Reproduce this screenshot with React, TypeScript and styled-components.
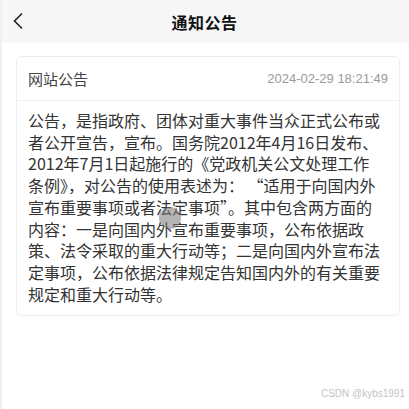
import React from "react";
import styled, { createGlobalStyle } from "styled-components";

const GlobalStyle = createGlobalStyle`
  html, body {
    margin: 0;
    padding: 0;
    background: #ffffff;
  }
  * {
    box-sizing: border-box;
  }
`;

const Page = styled.div`
  position: relative;
  width: 409px;
  height: 409px;
  overflow: hidden;
  background: #ffffff;
  font-family: "Noto Sans CJK SC", "Noto Sans", sans-serif;
  border-left: 2px solid #f0f0f0;
`;

const NavBar = styled.div`
  height: 43px;
  background: #f7f7f7;
  display: flex;
  align-items: center;
  justify-content: center;
  position: relative;
  margin-left: -2px;
`;

const BackButton = styled.div`
  position: absolute;
  left: 12px;
  top: 11px;
  width: 16px;
  height: 20px;
  display: flex;
  align-items: center;
`;

const NavTitle = styled.h1`
  margin: 0;
  font-size: 16px;
  font-weight: 700;
  color: #111;
  letter-spacing: 0.5px;
`;

const Body = styled.div`
  padding: 13px 9px 0 14px;
`;

const Card = styled.div`
  border: 1px solid #ececec;
  border-radius: 6px;
  background: #fff;
`;

const CardHeader = styled.div`
  height: 44px;
  display: flex;
  align-items: center;
  justify-content: space-between;
  padding: 0 11px;
  border-bottom: 1px solid #f0f0f0;
`;

const CardTitle = styled.span`
  font-size: 15px;
  color: #444;
`;

const CardDate = styled.span`
  font-family: "Liberation Sans", Arial, sans-serif;
  font-size: 13px;
  color: #9a9a9a;
`;

const CardContent = styled.div`
  display: flex;
  flex-direction: column;
  padding: 9px 11px 10px;
  font-size: 16px;
  line-height: 21.7px;
  color: #333;
`;

const Line = styled.span`
  white-space: nowrap;
`;

const TouchDot = styled.div`
  position: absolute;
  left: 157px;
  top: 207px;
  width: 22px;
  height: 22px;
  border-radius: 50%;
  background: rgba(120, 120, 120, 0.55);
`;

const Watermark = styled.span`
  position: absolute;
  right: 4px;
  bottom: 10px;
  font-family: "Liberation Sans", Arial, sans-serif;
  font-size: 10px;
  color: #c4c4c4;
`;

const lines = [
  "公告，是指政府、团体对重大事件当众正式公布或",
  "者公开宣告，宣布。国务院2012年4月16日发布、",
  "2012年7月1日起施行的《党政机关公文处理工作",
  "条例》，对公告的使用表述为： “适用于向国内外",
  "宣布重要事项或者法定事项”。其中包含两方面的",
  "内容：一是向国内外宣布重要事项，公布依据政",
  "策、法令采取的重大行动等；二是向国内外宣布法",
  "定事项，公布依据法律规定告知国内外的有关重要",
  "规定和重大行动等。",
];

const App = () => {
  return (
    <>
      <GlobalStyle />
      <Page>
        <NavBar>
          <BackButton>
            <svg width="12" height="18" viewBox="0 0 12 18" fill="none">
              <path d="M10 1.5 L2.5 9 L10 16.5" stroke="#222" strokeWidth="1.6" />
            </svg>
          </BackButton>
          <NavTitle>通知公告</NavTitle>
        </NavBar>
        <Body>
          <Card>
            <CardHeader>
              <CardTitle>网站公告</CardTitle>
              <CardDate>2024-02-29 18:21:49</CardDate>
            </CardHeader>
            <CardContent>
              {lines.map((line, i) => (
                <Line key={i}>{line}</Line>
              ))}
            </CardContent>
          </Card>
        </Body>
        <TouchDot />
        <Watermark>CSDN @kybs1991</Watermark>
      </Page>
    </>
  );
};

export default App;
